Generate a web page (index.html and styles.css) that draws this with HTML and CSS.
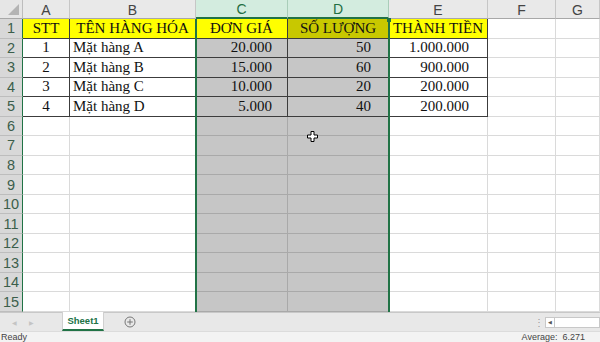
FILE: index.html
```html
<!DOCTYPE html>
<html>
<head>
<meta charset="utf-8">
<link rel="stylesheet" href="styles.css">
</head>
<body>
<div class="app">
  <div class="sheet">
    <div class="corner"><span class="tri"></span></div>
    <div class="ch">A</div>
    <div class="ch">B</div>
    <div class="ch sel">C</div>
    <div class="ch sel">D</div>
    <div class="ch">E</div>
    <div class="ch">F</div>
    <div class="ch">G</div>

    <div class="rh">1</div>
    <div class="c t y ctr">STT</div>
    <div class="c t y ctr">TÊN HÀNG HÓA</div>
    <div class="c t y ctr">ĐƠN GIÁ</div>
    <div class="c t yd ctr">SỐ LƯỢNG</div>
    <div class="c t y ctr">THÀNH TIỀN</div>
    <div class="c"></div>
    <div class="c"></div>

    <div class="rh">2</div>
    <div class="c t ctr">1</div>
    <div class="c t">Mặt hàng A</div>
    <div class="c t s r rc">20.000</div>
    <div class="c t s r rd">50</div>
    <div class="c t r re">1.000.000</div>
    <div class="c"></div>
    <div class="c"></div>

    <div class="rh">3</div>
    <div class="c t ctr">2</div>
    <div class="c t">Mặt hàng B</div>
    <div class="c t s r rc">15.000</div>
    <div class="c t s r rd">60</div>
    <div class="c t r re">900.000</div>
    <div class="c"></div>
    <div class="c"></div>

    <div class="rh">4</div>
    <div class="c t ctr">3</div>
    <div class="c t">Mặt hàng C</div>
    <div class="c t s r rc">10.000</div>
    <div class="c t s r rd">20</div>
    <div class="c t r re">200.000</div>
    <div class="c"></div>
    <div class="c"></div>

    <div class="rh">5</div>
    <div class="c t ctr">4</div>
    <div class="c t">Mặt hàng D</div>
    <div class="c t s r rc">5.000</div>
    <div class="c t s r rd">40</div>
    <div class="c t r re">200.000</div>
    <div class="c"></div>
    <div class="c"></div>

    <div class="rh">6</div><div class="c"></div><div class="c"></div><div class="c s"></div><div class="c s"></div><div class="c"></div><div class="c"></div><div class="c"></div>
    <div class="rh">7</div><div class="c"></div><div class="c"></div><div class="c s"></div><div class="c s"></div><div class="c"></div><div class="c"></div><div class="c"></div>
    <div class="rh">8</div><div class="c"></div><div class="c"></div><div class="c s"></div><div class="c s"></div><div class="c"></div><div class="c"></div><div class="c"></div>
    <div class="rh">9</div><div class="c"></div><div class="c"></div><div class="c s"></div><div class="c s"></div><div class="c"></div><div class="c"></div><div class="c"></div>
    <div class="rh">10</div><div class="c"></div><div class="c"></div><div class="c s"></div><div class="c s"></div><div class="c"></div><div class="c"></div><div class="c"></div>
    <div class="rh">11</div><div class="c"></div><div class="c"></div><div class="c s"></div><div class="c s"></div><div class="c"></div><div class="c"></div><div class="c"></div>
    <div class="rh">12</div><div class="c"></div><div class="c"></div><div class="c s"></div><div class="c s"></div><div class="c"></div><div class="c"></div><div class="c"></div>
    <div class="rh">13</div><div class="c"></div><div class="c"></div><div class="c s"></div><div class="c s"></div><div class="c"></div><div class="c"></div><div class="c"></div>
    <div class="rh">14</div><div class="c"></div><div class="c"></div><div class="c s"></div><div class="c s"></div><div class="c"></div><div class="c"></div><div class="c"></div>
    <div class="rh">15</div><div class="c"></div><div class="c"></div><div class="c s"></div><div class="c s"></div><div class="c"></div><div class="c"></div><div class="c"></div>

    <div class="selbox"></div>
    <span class="handle"></span>
    <svg class="cursor" width="11" height="11" viewBox="0 0 11 11">
      <path d="M4 0.5h3v3.5h3.5v3h-3.5v3.5h-3v-3.5h-3.5v-3h3.5z" fill="#fff" stroke="#000" stroke-width="1"/>
    </svg>
  </div>

  <div class="tabbar">
    <div class="navs"><span class="nav">&#9664;</span><span class="nav">&#9654;</span></div>
    <div class="tab">Sheet1</div>
    <div class="add">
      <svg width="12" height="12" viewBox="0 0 12 12">
        <circle cx="6" cy="6" r="5" fill="none" stroke="#777" stroke-width="1"/>
        <path d="M6 3.2v5.6M3.2 6h5.6" stroke="#777" stroke-width="1"/>
      </svg>
    </div>
    <div class="spacer"></div>
    <div class="dots">&#8942;</div>
    <div class="hscroll"><span class="larr">&#9664;</span><span class="track"></span></div>
  </div>

  <div class="status">
    <span class="ready">Ready</span>
    <span class="spacer"></span>
    <span class="avg">Average:&nbsp; 6.271</span>
  </div>
</div>
</body>
</html>
```

FILE: styles.css
```css
* { box-sizing: border-box; }
html, body { margin: 0; padding: 0; }
body { width: 600px; height: 342px; overflow: hidden; background: #fff; }

.app { width: 600px; height: 342px; display: flex; flex-direction: column; }

.sheet {
  position: relative;
  height: 312px;
  display: grid;
  grid-template-columns: 23px 47px 126px 92px 101px 99px 68px 1fr;
  grid-template-rows: 19px repeat(15, 1fr);
  font-family: "Liberation Serif", "Times New Roman", serif;
  font-size: 15px;
  color: #111;
  overflow: hidden;
}

.corner {
  position: relative;
  background: #e6e6e6;
  border-right: 1px solid #bdbdbd;
  border-bottom: 1px solid #a8a8a8;
}
.tri {
  position: absolute;
  right: 3px;
  bottom: 3px;
  width: 0;
  height: 0;
  border-left: 11px solid transparent;
  border-bottom: 11px solid #b4b4b4;
}

.ch {
  background: #e9e9e9;
  border-right: 1px solid #c6c6c6;
  border-bottom: 1px solid #a8a8a8;
  display: flex;
  align-items: center;
  justify-content: center;
  font-family: "Liberation Sans", Arial, sans-serif;
  font-size: 14px;
  color: #444;
  padding-top: 1px;
}
.ch.sel {
  background: #d3ecdf;
  color: #1f6e43;
  border-right-color: #a9cdb9;
  border-bottom: 2px solid #217346;
}

.rh {
  background: #d8d8d8;
  border-right: 1px solid #217346;
  border-bottom: 1px solid #bdbdbd;
  display: flex;
  align-items: center;
  justify-content: center;
  font-family: "Liberation Sans", Arial, sans-serif;
  font-size: 14.5px;
  color: #3b5e4b;
}

.c {
  border-right: 1px solid #dadada;
  border-bottom: 1px solid #dadada;
  display: flex;
  align-items: center;
  padding: 0 3px;
  white-space: nowrap;
  overflow: hidden;
}
.c.s {
  background: #c6c6c6;
  border-right-color: #a9a9a9;
  border-bottom-color: #a9a9a9;
}
.c.t {
  border-right-color: #3c3c3c;
  border-bottom-color: #3c3c3c;
}
.c.y { background: #ffff00; }
.c.yd { background: #c8c800; }
.ctr { justify-content: center; }
.r { justify-content: flex-end; }
.rc { padding-right: 15px; }
.rd { padding-right: 17px; }
.re { padding-right: 18px; }

.selbox {
  position: absolute;
  left: 195px;
  top: 19px;
  width: 195px;
  bottom: -4px;
  border-left: 2px solid #217346;
  border-right: 2px solid #217346;
  pointer-events: none;
}
.handle {
  position: absolute;
  left: 387px;
  top: 18px;
  width: 4px;
  height: 4px;
  background: #217346;
}
.cursor {
  position: absolute;
  left: 307px;
  top: 131px;
}

.tabbar {
  height: 19px;
  background: #e8e8e8;
  border-top: 1px solid #c8c8c8;
  display: flex;
  align-items: stretch;
  font-family: "Liberation Sans", Arial, sans-serif;
}
.navs {
  width: 62px;
  display: flex;
  align-items: center;
  gap: 12px;
  padding-left: 12px;
}
.nav { font-size: 6px; color: #c4c4c4; }
.tab {
  width: 42px;
  margin-top: -1px;
  background: #fff;
  border-left: 1px solid #d0d0d0;
  border-right: 1px solid #d0d0d0;
  border-bottom: 2px solid #217346;
  display: flex;
  align-items: center;
  justify-content: center;
  font-size: 9.5px;
  font-weight: bold;
  color: #217346;
}
.add {
  width: 52px;
  display: flex;
  align-items: center;
  justify-content: center;
}
.spacer { flex: 1; }
.dots {
  width: 12px;
  display: flex;
  align-items: center;
  justify-content: center;
  font-size: 10px;
  color: #9a9a9a;
}
.hscroll {
  width: 55px;
  display: flex;
  align-items: center;
}
.larr {
  width: 10px;
  height: 11px;
  background: #fff;
  border: 1px solid #c8c8c8;
  font-size: 5px;
  color: #555;
  display: flex;
  align-items: center;
  justify-content: center;
}
.track {
  flex: 1;
  height: 11px;
  background: #fff;
  border: 1px solid #c8c8c8;
  border-left: none;
}

.status {
  height: 11px;
  background: #f3f3f3;
  border-top: 1px solid #dcdcdc;
  display: flex;
  align-items: center;
  font-family: "Liberation Sans", Arial, sans-serif;
  font-size: 9px;
  color: #444;
  padding: 0 0 0 1px;
  overflow: hidden;
}
.avg { margin-right: 15px; }
```
